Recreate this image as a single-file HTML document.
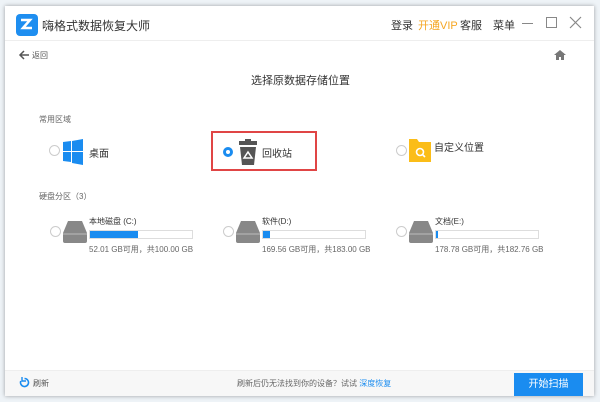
<!DOCTYPE html>
<html><head><meta charset="utf-8"><style>
*{margin:0;padding:0;box-sizing:border-box}
body{width:600px;height:402px;overflow:hidden;background:#eef3f7;font-family:"Liberation Sans","Noto Sans CJK SC",sans-serif;position:relative;color:#333}
.win{position:absolute;left:5px;top:6px;width:589px;height:390px;background:#fff;box-shadow:0 0 4px rgba(0,0,0,.35)}
.c{position:absolute;left:0;top:0;width:600px;height:402px}
.a{position:absolute;white-space:nowrap}
.radio{position:absolute;width:11px;height:11px;border:1px solid #ccc;border-radius:50%;background:#fff}
.bar{position:absolute;width:104px;height:9px;border:1px solid #ddd;background:#fff}
.bar i{display:block;height:100%;background:#1a8cf0}
.small{font-size:8px;color:#666}
</style></head><body>
<div class="win"></div>
<div class="c">
 <div class="a" style="left:16px;top:14px;width:22px;height:22px;background:#1e8ef0;border-radius:4px"></div>
 <svg class="a" style="left:18px;top:17px" width="18" height="16" viewBox="0 0 18 16"><path d="M3 3h9l-7 8h9" stroke="#fff" stroke-width="2.5" fill="none"/></svg>
 <div class="a" style="left:42px;top:17px;font-size:12px;color:#333">嗨格式数据恢复大师</div>
 <div class="a" style="left:391px;top:17px;font-size:11px">登录</div>
 <div class="a" style="left:418px;top:17px;font-size:11px;color:#f5a623">开通VIP</div>
 <div class="a" style="left:460px;top:17px;font-size:11px">客服</div>
 <div class="a" style="left:493px;top:17px;font-size:11px">菜单</div>
 <div class="a" style="left:522px;top:23px;width:11px;height:1px;background:#888"></div>
 <div class="a" style="left:546px;top:17px;width:11px;height:11px;border:1px solid #888"></div>
 <svg class="a" style="left:569px;top:16px" width="13" height="13"><path d="M1 1L12 12M12 1L1 12" stroke="#888" stroke-width="1.2"/></svg>
 <div class="a" style="left:5px;top:40px;width:589px;height:1px;background:#eee"></div>
 <svg class="a" style="left:18px;top:50px" width="12" height="10"><path d="M11 5H2M6 1L2 5l4 4" stroke="#555" stroke-width="1.5" fill="none"/></svg>
 <div class="a" style="left:32px;top:50px;font-size:8px;color:#555">返回</div>
 <svg class="a" style="left:554px;top:49px" width="12" height="12"><path d="M6 1L0 6h2v5h3V8h2v3h3V6h2z" fill="#777"/></svg>
 <div class="a" style="left:251px;top:72px;font-size:11px;color:#333">选择原数据存储位置</div>
 <div class="a" style="left:39px;top:114px;font-size:8px;color:#666">常用区域</div>
 <div class="radio" style="left:49px;top:145px"></div>
 <svg class="a" style="left:63px;top:139px" width="20" height="26"><path d="M0 3l8-1v10H0zM9 2l11-2v12H9zM0 13h8v10l-8-1zM9 13h11v13l-11-2z" fill="#1a8cf0"/></svg>
 <div class="a" style="left:89px;top:145px;font-size:10px">桌面</div>
 <div class="a" style="left:211px;top:131px;width:106px;height:40px;border:2px solid #e04545"></div>
 <div class="a" style="left:223px;top:147px;width:10px;height:10px;border-radius:50%;border:3px solid #1a8cf0"></div>
 <svg class="a" style="left:238px;top:139px" width="20" height="26"><path d="M7 0h6v2h6v4H1V2h6z" fill="#555"/><path d="M2 8h16l-2 18H4z" fill="#555"/><path d="M10 13l4 6H6z" fill="none" stroke="#fff" stroke-width="1.5"/></svg>
 <div class="a" style="left:262px;top:145px;font-size:10px">回收站</div>
 <div class="radio" style="left:396px;top:145px"></div>
 <svg class="a" style="left:409px;top:137px" width="24" height="25"><path d="M0 2h8l2 3h12v20H0z" fill="#fbbd18"/><circle cx="11" cy="15" r="3.5" stroke="#fff" stroke-width="1.6" fill="none"/><path d="M13.5 17.5l2.5 2.5" stroke="#fff" stroke-width="1.6"/></svg>
 <div class="a" style="left:434px;top:139px;font-size:10px">自定义位置</div>
 <div class="a" style="left:39px;top:191px;font-size:8px;color:#666">硬盘分区（3）</div>

 <div class="radio" style="left:50px;top:226px"></div>
 <svg class="a" style="left:62px;top:221px" width="26" height="22"><path d="M6 0h14l5 12v8a2 2 0 0 1-2 2H3a2 2 0 0 1-2-2v-8z" fill="#888"/><path d="M1 13h24" stroke="#bbb"/></svg>
 <div class="a" style="left:89px;top:216px;font-size:8px">本地磁盘 (C:)</div>
 <div class="bar" style="left:89px;top:230px"><i style="width:47%"></i></div>
 <div class="a small" style="left:89px;top:244px">52.01 GB可用，共100.00 GB</div>

 <div class="radio" style="left:223px;top:226px"></div>
 <svg class="a" style="left:235px;top:221px" width="26" height="22"><path d="M6 0h14l5 12v8a2 2 0 0 1-2 2H3a2 2 0 0 1-2-2v-8z" fill="#888"/><path d="M1 13h24" stroke="#bbb"/></svg>
 <div class="a" style="left:262px;top:216px;font-size:8px">软件(D:)</div>
 <div class="bar" style="left:262px;top:230px"><i style="width:7%"></i></div>
 <div class="a small" style="left:262px;top:244px">169.56 GB可用，共183.00 GB</div>

 <div class="radio" style="left:396px;top:226px"></div>
 <svg class="a" style="left:408px;top:221px" width="26" height="22"><path d="M6 0h14l5 12v8a2 2 0 0 1-2 2H3a2 2 0 0 1-2-2v-8z" fill="#888"/><path d="M1 13h24" stroke="#bbb"/></svg>
 <div class="a" style="left:435px;top:216px;font-size:8px">文档(E:)</div>
 <div class="bar" style="left:435px;top:230px"><i style="width:2%"></i></div>
 <div class="a small" style="left:435px;top:244px">178.78 GB可用，共182.76 GB</div>

 <div class="a" style="left:5px;top:370px;width:589px;height:26px;background:#f7f7f7;border-top:1px solid #eee"></div>
 <svg class="a" style="left:19px;top:377px" width="11" height="11"><path d="M5.5 1.5A4 4 0 1 1 1.8 4" stroke="#1a8cf0" stroke-width="1.6" fill="none"/><path d="M3 0v4h4" fill="none" stroke="#1a8cf0" stroke-width="1.4"/></svg>
 <div class="a" style="left:33px;top:378px;font-size:8px;color:#555">刷新</div>
 <div class="a" style="left:237px;top:378px;font-size:8px;color:#666">刷新后仍无法找到你的设备？试试 <span style="color:#1a8cf0">深度恢复</span></div>
 <div class="a" style="left:514px;top:373px;width:69px;height:23px;background:#1a8cf0;color:#fff;font-size:10px;text-align:center;line-height:23px">开始扫描</div>
</div>
</body></html>
